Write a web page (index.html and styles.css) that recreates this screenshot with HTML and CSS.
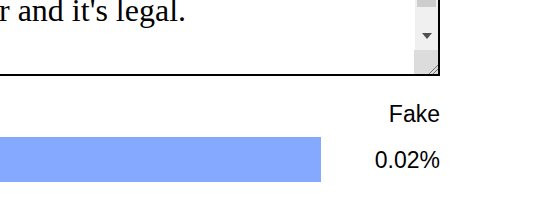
FILE: index.html
```html
<!DOCTYPE html>
<html lang="en">
<head>
    <meta charset="UTF-8">
    <title>Fake News Check</title>
    <link rel="stylesheet" href="styles.css">
</head>
<body>
    <div class="checker">
        <div class="input-box">
            <div class="input-text">r and it's legal.</div>
            <div class="scrollbar">
                <div class="track">
                    <div class="thumb"></div>
                    <div class="arrow-down"></div>
                </div>
                <div class="resizer"></div>
            </div>
        </div>

        <div class="result">
            <div class="result-label">Fake</div>
            <div class="result-row">
                <div class="bar" style="width: 321px;"></div>
                <div class="result-value">0.02%</div>
            </div>
        </div>
    </div>
</body>
</html>
```

FILE: styles.css
```css
body {
    margin: 0;
    background: #fff;
    color: #000;
    overflow: hidden;
}

.checker {
    width: 440px;
}

.input-box {
    display: flex;
    height: 74px;
    border-right: 2px solid #000;
    border-bottom: 2px solid #000;
    background: #fff;
}

.input-text {
    flex: 1;
    font-family: "Liberation Serif", "Times New Roman", serif;
    font-size: 32px;
    line-height: 36px;
    margin: -8px 0 0 -1px;
    white-space: nowrap;
    overflow: hidden;
}

.scrollbar {
    width: 23px;
    display: flex;
    flex-direction: column;
    background: #f0f0f0;
}

.track {
    flex: 1;
    display: flex;
    flex-direction: column;
    align-items: center;
}

.thumb {
    align-self: stretch;
    height: 7px;
    margin: 0 2px;
    background: #cdcdcd;
}

.arrow-down {
    width: 0;
    height: 0;
    margin-top: auto;
    margin-bottom: 11px;
    border-left: 5px solid transparent;
    border-right: 5px solid transparent;
    border-top: 6px solid #505050;
}

.resizer {
    height: 24px;
    margin-left: -1px;
    background:
        linear-gradient(135deg, transparent 0 80%, #6e6e6e 80% 83%, transparent 83% 88%, #6e6e6e 88% 91%, transparent 91%),
        #dcdcdc;
}

.result {
    margin-top: 25px;
    font-family: "Liberation Sans", Arial, sans-serif;
    font-size: 23px;
    line-height: 26px;
}

.result-label {
    text-align: right;
}

.result-row {
    display: flex;
    align-items: center;
    margin-top: 10px;
}

.bar {
    height: 45px;
    background: #84a9ff;
}

.result-value {
    flex: 1;
    text-align: right;
}
```
